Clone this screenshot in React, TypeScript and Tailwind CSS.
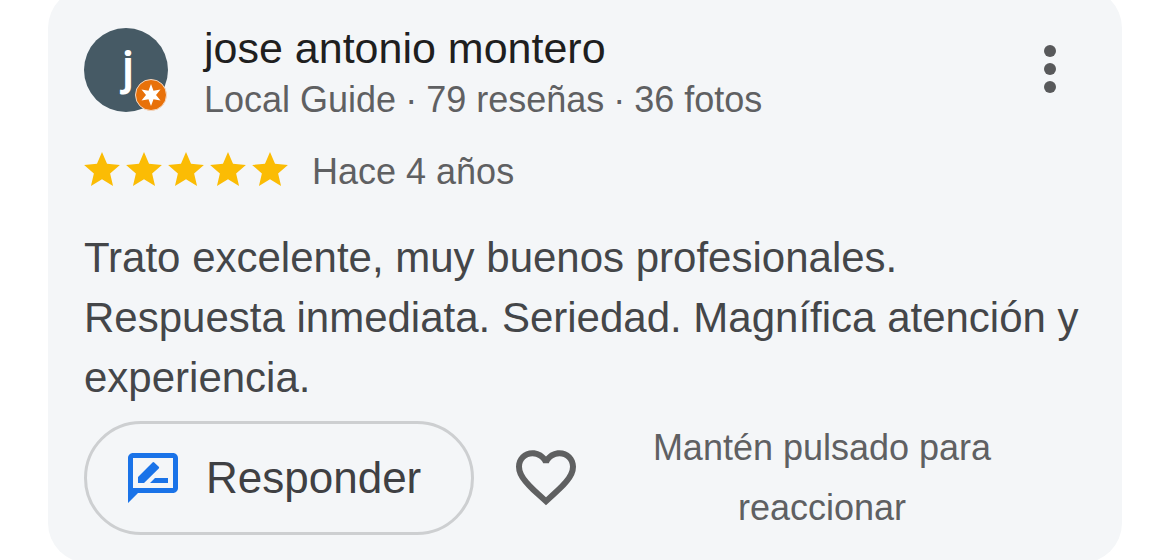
import { Fragment } from "react";

type Review = {
    author: string;
    initial: string;
    details: string[];
    rating: number;
    date: string;
    text: string;
};

const review: Review = {
    author: "jose antonio montero",
    initial: "j",
    details: ["Local Guide", "79 reseñas", "36 fotos"],
    rating: 5,
    date: "Hace 4 años",
    text: "Trato excelente, muy buenos profesionales. Respuesta inmediata. Seriedad. Magnífica atención y experiencia.",
};

const Avatar = ({ initial }: { initial: string }) => (
    <div className="relative size-[84px] shrink-0 rounded-full bg-[#465a65] flex items-center justify-center">
        <span className="pb-1 pl-1 font-['Roboto',sans-serif] text-[48px] font-medium leading-none text-white">{initial}</span>
        <svg viewBox="0 0 32 32" className="absolute right-px bottom-px size-8" aria-hidden="true">
            <circle cx="16" cy="16" r="15.5" fill="#e8710a" stroke="#f3d9c5" />
            <path
                fill="#fff"
                d="M16 5l2.5 6.7 7-1.2L21 16l4.5 5.5-7-1.2L16 27l-2.500-6.700-7 1.200L11 16l-4.500-5.500 7 1.200z"
            />
        </svg>
    </div>
);

const Stars = ({ count }: { count: number }) => (
    <div className="flex gap-1.5" role="img" aria-label={`${count} estrellas`}>
        {Array.from({ length: count }, (_, i) => (
            <svg key={i} viewBox="2 2 20 19" className="w-9 h-[34px] fill-[#fbbc04]">
                <path d="M12 17.27L18.18 21l-1.64-7.03L22 9.24l-7.19-.61L12 2 9.19 8.63 2 9.24l5.46 4.73L5.82 21z" />
            </svg>
        ))}
    </div>
);

const ReplyIcon = () => (
    <svg viewBox="2 2 20 20" className="size-[50px] fill-[#1a73e8]" aria-hidden="true">
        <path d="M20 2H4c-1.1 0-2 .9-2 2v18l4-4h14c1.1 0 2-.9 2-2V4c0-1.1-.9-2-2-2zm0 14H4V4h16z" />
        <path d="M6 14v-2.4l5.8-5.8c.2-.3.5-.3.7 0l1.8 1.7c.2.2.2.5 0 .7L8.4 14zM10.8 14l2-2H18v2z" />
    </svg>
);

const HeartIcon = () => (
    <svg viewBox="2 3 20 18.5" className="w-[60px] h-[56px] fill-[#5f6061]" aria-hidden="true">
        <path d="M16.5 3c-1.74 0-3.41.81-4.5 2.09C10.91 3.81 9.24 3 7.5 3 4.42 3 2 5.42 2 8.5c0 3.78 3.4 6.86 8.55 11.54L12 21.35l1.45-1.32C18.6 15.36 22 12.28 22 8.5 22 5.42 19.58 3 16.5 3zm-4.4 15.55l-.1.1-.1-.1C7.14 14.24 4 11.39 4 8.5 4 6.5 5.5 5 7.5 5c1.54 0 3.04.99 3.57 2.36h1.87C13.46 5.99 14.96 5 16.5 5c2 0 3.5 1.5 3.5 3.5 0 2.89-3.14 5.74-7.9 10.05z" />
    </svg>
);

export default function App() {
    return (
        <main className="bg-white px-12 overflow-hidden font-['Liberation_Sans',Arial,sans-serif]">
            <article className="-mt-3 rounded-[40px] bg-[#f4f6f8] px-9 pt-9 pb-[25px]">
                <header className="flex items-start">
                    <div className="pt-1">
                        <Avatar initial={review.initial} />
                    </div>
                    <div className="ml-9 flex-1">
                        <h2 className="text-[43px] leading-[48px] text-[#1f1f1f]">{review.author}</h2>
                        <p className="mt-1 flex gap-[9px] text-[36px] leading-[48px] text-[#5f6062]">
                            {review.details.map((detail, i) => (
                                <Fragment key={detail}>
                                    {i > 0 && <span>·</span>}
                                    <span>{detail}</span>
                                </Fragment>
                            ))}
                        </p>
                    </div>
                    <button type="button" aria-label="Más opciones" className="mt-5 mr-[30px] cursor-pointer">
                        <svg viewBox="0 0 12 50" className="w-3 h-[50px] fill-[#58595b]">
                            <circle cx="6" cy="7" r="6" />
                            <circle cx="6" cy="25" r="6" />
                            <circle cx="6" cy="43" r="6" />
                        </svg>
                    </button>
                </header>
                <div className="mt-6 flex items-start gap-6">
                    <div className="pt-1">
                        <Stars count={review.rating} />
                    </div>
                    <span className="text-[36px] leading-[48px] text-[#5f6062]">{review.date}</span>
                </div>
                <p className="mt-8 text-[42px] leading-[60px] text-[#444649]">{review.text}</p>
                <footer className="mt-2.5 flex items-center">
                    <button
                        type="button"
                        className="flex h-[114px] w-[390px] shrink-0 items-center gap-7 rounded-full border-3 border-[#cdcfd1] pl-[41px] cursor-pointer"
                    >
                        <ReplyIcon />
                        <span className="text-[44px] leading-[60px] text-[#3f4043]">Responder</span>
                    </button>
                    <button type="button" aria-label="Me gusta" className="ml-[42px] shrink-0 cursor-pointer">
                        <HeartIcon />
                    </button>
                    <p className="flex-1 pr-[18px] text-center text-[36px] leading-[60px] text-[#5f6062]">
                        Mantén pulsado para reaccionar
                    </p>
                </footer>
            </article>
        </main>
    );
}
